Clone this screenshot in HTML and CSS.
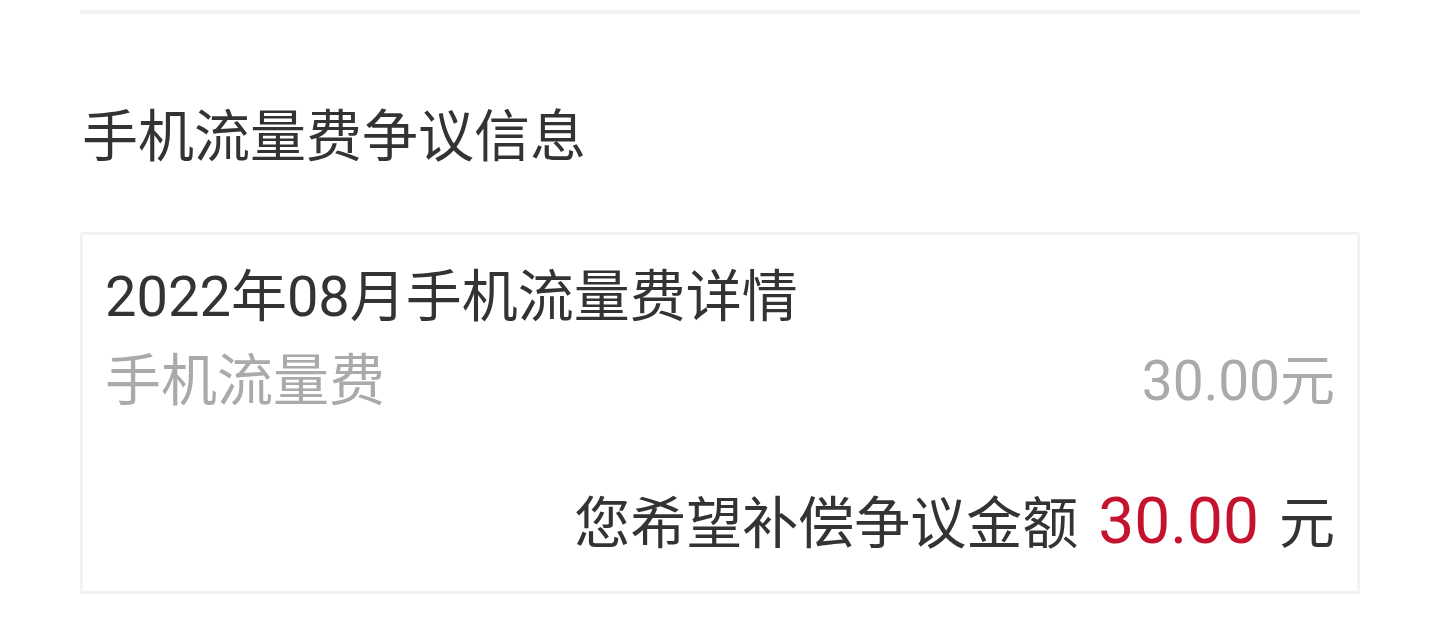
FILE: index.html
```html
<!DOCTYPE html>
<html lang="zh-CN">
<head>
<meta charset="utf-8">
<title>手机流量费争议信息</title>
<link rel="stylesheet" href="styles.css">
</head>
<body>
<div class="divider"></div>
<h2 class="heading">手机流量费争议信息</h2>
<div class="card">
  <div class="card-title">2022年08月手机流量费详情</div>
  <div class="row">
    <span class="label">手机流量费</span>
    <span class="value">30.00元</span>
  </div>
  <div class="claim">
    <span>您希望补偿争议金额</span>
    <span class="amount">30.00</span>
    <span>元</span>
  </div>
</div>
</body>
</html>
```
FILE: styles.css
```css
html, body {
  margin: 0;
  padding: 0;
  background: #ffffff;
}
body {
  font-family: Roboto, "Noto Sans CJK SC", sans-serif;
  color: #333333;
}
.divider {
  margin: 10px 71px 0 80px;
  height: 4px;
  background: #f2f2f2;
}
.heading {
  margin: 81px 0 53px 82px;
  font-size: 56px;
  font-weight: 400;
  line-height: 84px;
  color: #333333;
}
.card {
  margin: 0 71px 0 80px;
  border: 3px solid #f2f2f2;
  padding: 20px 22px 25px 22px;
}
.card-title {
  font-size: 56px;
  line-height: 84px;
  color: #333333;
}
.row {
  display: flex;
  justify-content: space-between;
  font-size: 56px;
  line-height: 84px;
  color: #aaaaaa;
}
.value {
  font-size: 55px;
}
.claim {
  margin-top: 57px;
  display: flex;
  justify-content: flex-end;
  align-items: baseline;
  gap: 20px;
  font-size: 56px;
  line-height: 84px;
  color: #333333;
}
.amount {
  font-size: 64px;
  color: #c4122f;
}
```
